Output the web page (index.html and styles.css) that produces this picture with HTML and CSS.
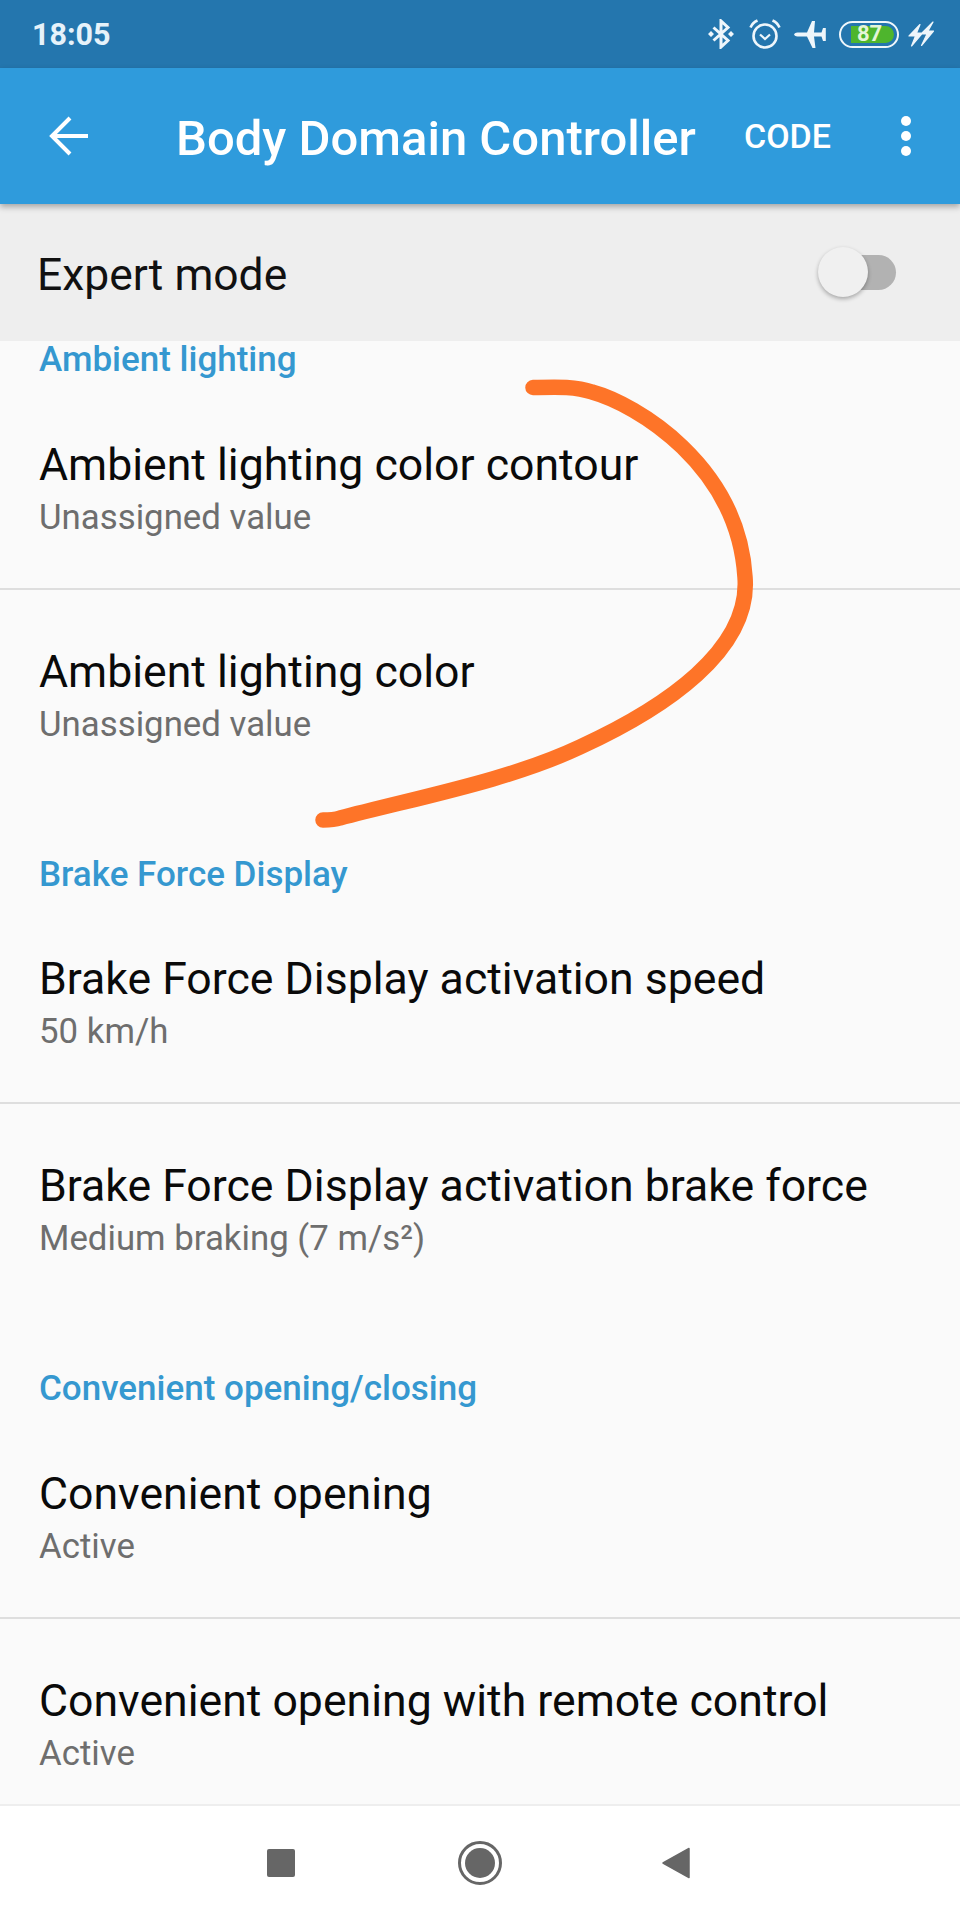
FILE: index.html
```html
<!DOCTYPE html>
<html lang="en">
<head>
<meta charset="utf-8">
<title>Body Domain Controller</title>
<link rel="stylesheet" href="styles.css">
</head>
<body>
<div class="screen">
  <header class="statusbar">
    <span class="time">18:05</span>
    <div class="status-icons">
      <svg class="ic-bt" viewBox="0 0 26 30"><path d="M5.500 8.500L20 21.500L13 28V2l7 6.500L5.500 21.500" fill="none" stroke="#eef6fb" stroke-width="3"/><path d="M3 12l3 3-3 3-3-3ZM23 12l3 3-3 3-3-3Z" fill="#eef6fb"/></svg>
      <svg class="ic-alarm" viewBox="0 0 32 30"><circle cx="16" cy="17" r="11.500" fill="none" stroke="#eef6fb" stroke-width="2.600"/><path d="M11 15.500l5 4.500 5-4.500" fill="none" stroke="#eef6fb" stroke-width="2.200"/><path d="M1.500 8.500C3 5 5 3 8.500 1.500M30.500 8.500C29 5 27 3 23.500 1.500" fill="none" stroke="#eef6fb" stroke-width="2.600"/></svg>
      <svg class="ic-plane" viewBox="0 0 32 27"><path d="M0 13.500C1 11.500 3 11.500 5 11.500H13L18 0h3L20 11.500H27.500L29 7h2.800v13H29l-1.500-4.500H20L21.500 27h-3L13 15.500H5C3 15.500 1 15.500 0 13.500Z" fill="#eef6fb"/></svg>
      <div class="battery"><div class="battery-level"><span class="battery-num">87</span></div></div>
      <svg class="ic-charge" viewBox="0 0 26 26"><path d="M12 3.500L1 15H7.500L3.500 25L14.500 12H8.500ZM25 1L13 13H19L13.500 24.500L25.500 10H20Z" fill="#eef6fb" stroke="#eef6fb" stroke-width="1.200" stroke-linejoin="round"/></svg>
    </div>
  </header>

  <div class="appbar">
    <svg class="back" viewBox="0 0 40 40"><path d="M39 20H3M21 2L3 20l18 18" fill="none" stroke="#fff" stroke-width="4"/></svg>
    <h1 class="title">Body Domain Controller</h1>
    <span class="action">CODE</span>
    <div class="dots"><i></i><i></i><i></i></div>
  </div>

  <div class="expert">
    <span class="expert-label">Expert mode</span>
    <div class="switch"><div class="thumb"></div></div>
  </div>

  <main class="list">
    <section class="section first">
      <h2 class="section-head">Ambient lighting</h2>
      <div class="row divided"><div class="row-title">Ambient lighting color contour</div><div class="row-sub">Unassigned value</div></div>
      <div class="row"><div class="row-title">Ambient lighting color</div><div class="row-sub">Unassigned value</div></div>
    </section>
    <section class="section">
      <h2 class="section-head">Brake Force Display</h2>
      <div class="row divided"><div class="row-title">Brake Force Display activation speed</div><div class="row-sub">50 km/h</div></div>
      <div class="row"><div class="row-title">Brake Force Display activation brake force</div><div class="row-sub">Medium braking (7 m/s²)</div></div>
    </section>
    <section class="section">
      <h2 class="section-head">Convenient opening/closing</h2>
      <div class="row divided"><div class="row-title">Convenient opening</div><div class="row-sub">Active</div></div>
      <div class="row"><div class="row-title">Convenient opening with remote control</div><div class="row-sub">Active</div></div>
    </section>
  </main>

  <nav class="navbar">
    <div class="nav-square"></div>
    <svg class="nav-home" viewBox="0 0 44 44"><circle cx="22" cy="22" r="20.500" fill="none" stroke="#666" stroke-width="3"/><circle cx="22" cy="22" r="15" fill="#666"/></svg>
    <svg class="nav-back" viewBox="0 0 28 32"><path d="M27 1.500V30.500L1 16Z" fill="#666" stroke="#666" stroke-width="1.500" stroke-linejoin="round"/></svg>
  </nav>

  <svg class="scribble" viewBox="0 0 960 1920"><path d="M533 387.500C555 387 575 386 592 392C636 404 738 465 745 577C751 650 665 708 580 747C510 780 420 797 340 818C334 820 328 820 323 820" fill="none" stroke="#fe7428" stroke-width="15.500" stroke-linecap="round" stroke-linejoin="round"/></svg>
</div>
</body>
</html>
```

FILE: styles.css
```css
* { box-sizing: border-box; }
html, body { margin: 0; padding: 0; }
body { font-family: Roboto, "Noto Sans", sans-serif; background: #fafafa; }
.screen { position: relative; width: 960px; height: 1920px; overflow: hidden; display: flex; flex-direction: column; background: #fafafa; }

.statusbar { height: 68px; flex: none; background: #2476ae; display: flex; align-items: center; justify-content: space-between; padding: 0 26px 0 32px; }
.time { font-size: 30.500px; font-weight: 700; color: #e6f2fa; }
.status-icons { display: flex; align-items: center; }
.status-icons svg { display: block; flex: none; }
.ic-bt { width: 26px; height: 30px; margin-right: 15px; }
.ic-alarm { width: 32px; height: 30px; margin-right: 13px; }
.ic-plane { width: 32px; height: 27px; margin-right: 13px; }
.ic-charge { width: 26px; height: 26px; margin-left: 9px; }
.battery { width: 60px; height: 27px; border: 2.500px solid #eef6fb; border-radius: 14px; padding: 3px; display: flex; }
.battery-level { width: 43px; margin-left: 7px; background: #4eb52d; border-radius: 0 9px 9px 0; display: flex; align-items: center; justify-content: flex-start; padding-left: 6px; }
.battery-num { font-size: 22px; font-weight: 700; color: #e4f5d8; line-height: 1; }

.appbar { height: 136px; flex: none; position: relative; z-index: 2; background: #2f9bdc; box-shadow: 0 3px 6px rgba(0,0,0,.3); display: flex; align-items: center; color: #fff; padding: 0 0 0 49px; }
.back { width: 40px; height: 40px; flex: none; margin-right: 87px; }
.title { font-size: 49px; font-weight: 500; margin: 0; padding-top: 4px; white-space: nowrap; flex: none; width: 568px; line-height: 1; }
.action { font-size: 34px; font-weight: 500; flex: none; width: 157px; }
.dots { display: flex; flex-direction: column; gap: 5px; flex: none; }
.dots i { display: block; width: 10px; height: 10px; border-radius: 50%; background: #fff; }

.expert { height: 137px; flex: none; background: #eeeeee; display: flex; align-items: center; justify-content: space-between; padding: 0 64px 0 37px; }
.expert-label { font-size: 44.400px; color: #111; padding-top: 5px; }
.switch { position: relative; width: 56px; height: 35px; border-radius: 17.500px; background: #b2b2b2; }
.thumb { position: absolute; left: -22px; top: -8px; width: 50px; height: 50px; border-radius: 50%; background: #f0f0f0; box-shadow: 0 2px 4px rgba(0,0,0,.3); }

.list { flex: 1; min-height: 0; }
.section { height: 514.500px; }
.section.first { margin-top: -59px; }
.section-head { margin: 0; height: 100.500px; padding: 60px 0 0 39px; font-size: 35px; line-height: 36px; font-weight: 500; color: #3598d0; }
.row { height: 207px; padding: 54px 39px 0; }
.row.divided { border-bottom: 2px solid #dedede; }
.row-title { font-size: 44.600px; line-height: 56px; color: #0a0a0a; white-space: nowrap; }
.row-sub { font-size: 34.800px; line-height: 48px; color: #6e6e6e; white-space: nowrap; }

.navbar { height: 116px; flex: none; background: #fff; border-top: 2px solid #eee; position: relative; display: flex; align-items: center; padding: 0 0 0 267px; }
.nav-square { width: 28px; height: 28px; background: #666; border-radius: 2px; flex: none; margin-right: 163px; }
.nav-home { width: 44px; height: 44px; flex: none; margin-right: 160px; }
.nav-back { width: 28px; height: 32px; flex: none; }

.scribble { position: absolute; left: 0; top: 0; width: 960px; height: 1920px; pointer-events: none; z-index: 3; }
```
